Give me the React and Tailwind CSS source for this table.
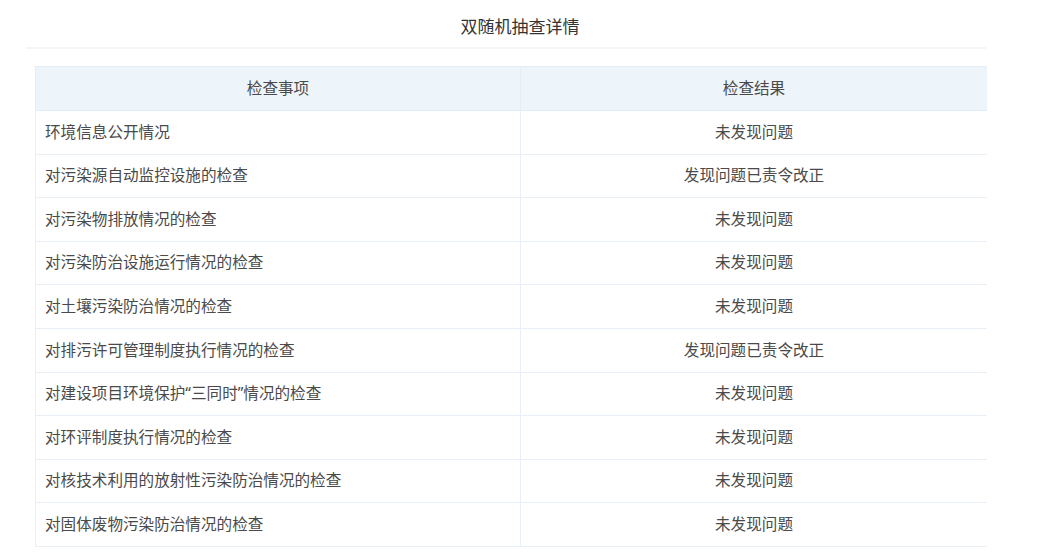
const rows = [
  ['环境信息公开情况', '未发现问题'],
  ['对污染源自动监控设施的检查', '发现问题已责令改正'],
  ['对污染物排放情况的检查', '未发现问题'],
  ['对污染防治设施运行情况的检查', '未发现问题'],
  ['对土壤污染防治情况的检查', '未发现问题'],
  ['对排污许可管理制度执行情况的检查', '发现问题已责令改正'],
  ['对建设项目环境保护“三同时”情况的检查', '未发现问题'],
  ['对环评制度执行情况的检查', '未发现问题'],
  ['对核技术利用的放射性污染防治情况的检查', '未发现问题'],
  ['对固体废物污染防治情况的检查', '未发现问题'],
];

const App = () => {
  return (
    <div className="w-[1038px] h-[559px] bg-white overflow-hidden font-['Noto_Sans','Noto_Sans_CJK_SC',sans-serif] text-[#4a4a4a]">
      <div className="ml-[26px] w-[960px]">
        {/* title */}
        <div className="h-[49px] border-b-2 border-[#f4f5f6] flex items-center justify-center pl-[28px]">
          <h1 className="text-[17px] text-[#333] pt-[6px]">双随机抽查详情</h1>
        </div>

        <table className="ml-[9px] mt-[17px] w-[952px] border-collapse table-fixed text-[15.6px]">
          <thead>
            <tr className="bg-[#eef5fa] h-[44px]">
              <th className="w-[485px] border border-[#e3edf6] font-normal text-center">检查事项</th>
              <th className="border border-[#e3edf6] border-r-0 font-normal text-center">检查结果</th>
            </tr>
          </thead>
          <tbody>
            {rows.map(([item, result], i) => (
              <tr key={i} className="h-[43.6px]">
                <td className="border border-[#e8eff7] pl-[9px] text-left">{item}</td>
                <td className="border border-[#e8eff7] border-r-0 text-center">{result}</td>
              </tr>
            ))}
          </tbody>
        </table>
      </div>
    </div>
  );
};

export default App;
